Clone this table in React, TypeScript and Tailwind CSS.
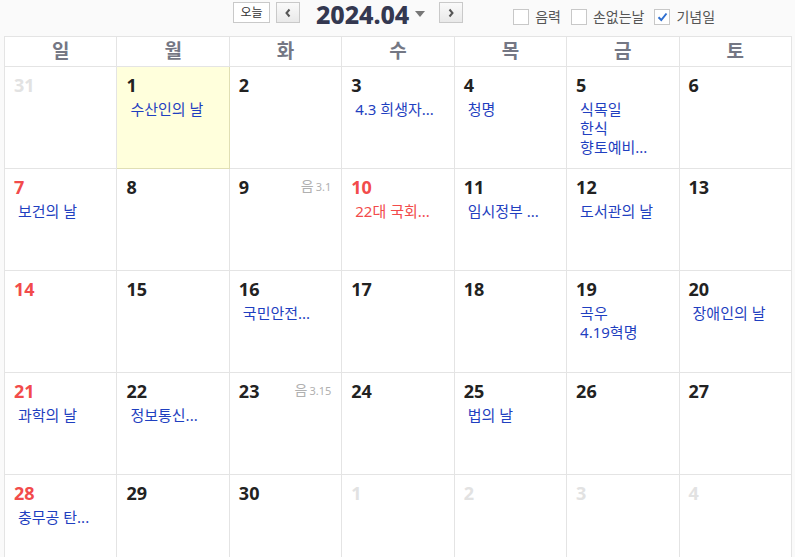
import React from "react";

type Ev = { t: string; red?: boolean };
type Day = { d: number; muted?: boolean; red?: boolean; today?: boolean; lunar?: string; events?: Ev[] };

const DAYS = ["일", "월", "화", "수", "목", "금", "토"];

const WEEKS: Day[][] = [
  [
    { d: 31, muted: true },
    { d: 1, today: true, events: [{ t: "수산인의 날" }] },
    { d: 2 },
    { d: 3, events: [{ t: "4.3 희생자..." }] },
    { d: 4, events: [{ t: "청명" }] },
    { d: 5, events: [{ t: "식목일" }, { t: "한식" }, { t: "향토예비..." }] },
    { d: 6 },
  ],
  [
    { d: 7, red: true, events: [{ t: "보건의 날" }] },
    { d: 8 },
    { d: 9, lunar: "3.1" },
    { d: 10, red: true, events: [{ t: "22대 국회...", red: true }] },
    { d: 11, events: [{ t: "임시정부 ..." }] },
    { d: 12, events: [{ t: "도서관의 날" }] },
    { d: 13 },
  ],
  [
    { d: 14, red: true },
    { d: 15 },
    { d: 16, events: [{ t: "국민안전..." }] },
    { d: 17 },
    { d: 18 },
    { d: 19, events: [{ t: "곡우" }, { t: "4.19혁명" }] },
    { d: 20, events: [{ t: "장애인의 날" }] },
  ],
  [
    { d: 21, red: true, events: [{ t: "과학의 날" }] },
    { d: 22, events: [{ t: "정보통신..." }] },
    { d: 23, lunar: "3.15" },
    { d: 24 },
    { d: 25, events: [{ t: "법의 날" }] },
    { d: 26 },
    { d: 27 },
  ],
  [
    { d: 28, red: true, events: [{ t: "충무공 탄..." }] },
    { d: 29 },
    { d: 30 },
    { d: 1, muted: true },
    { d: 2, muted: true },
    { d: 3, muted: true },
    { d: 4, muted: true },
  ],
];

const font = { fontFamily: '"Noto Sans", "Noto Sans CJK KR", sans-serif' };

const Check = ({ label, checked }: { label: string; checked?: boolean }) => (
  <label className="flex items-center gap-[6px] mr-[10px]">
    <span className="w-[16px] h-[16px] border border-[#c8c8c8] bg-white flex items-center justify-center">
      {checked && (
        <svg width="11" height="10" viewBox="0 0 11 10">
          <path d="M1.5 5.2 L4.3 8 L9.5 1.5" stroke="#2f6fd0" strokeWidth="2" fill="none" />
        </svg>
      )}
    </span>
    <span className="text-[14px] text-[#555]">{label}</span>
  </label>
);

const NavBtn = ({ dir }: { dir: "l" | "r" }) => (
  <button className="w-[24px] h-[21px] border border-[#c9c9c9] bg-gradient-to-b from-[#fafafa] to-[#e9e9e9] flex items-center justify-center">
    <svg width="8" height="10" viewBox="0 0 8 10">
      <path d={dir === "l" ? "M5.5 1.5 L2.5 5 L5.5 8.5" : "M2.5 1.5 L5.5 5 L2.5 8.5"} stroke="#555" strokeWidth="2" fill="none" />
    </svg>
  </button>
);

export default function App() {
  return (
    <div className="w-[795px] h-[557px] overflow-hidden bg-[#fafafa]" style={font}>
      <div className="h-[36px] flex items-start pl-[233px] pt-[2px]">
        <button className="h-[21px] w-[37px] border border-[#c9c9c9] bg-white text-[12px] text-[#333] leading-none">
          오늘
        </button>
        <div className="ml-[6px]">
          <NavBtn dir="l" />
        </div>
        <div className="ml-[16px] -mt-[2px] text-[25px] font-extrabold text-[#343850] leading-[28px] tracking-[-0.1px]">
          2024.04
        </div>
        <svg className="ml-[6px] mt-[9px]" width="10" height="6" viewBox="0 0 10 6">
          <path d="M0 0 L10 0 L5 6 Z" fill="#777" />
        </svg>
        <div className="ml-[14px]">
          <NavBtn dir="r" />
        </div>
        <div className="ml-[50px] mt-[4px] flex items-center">
          <Check label="음력" />
          <Check label="손없는날" />
          <Check label="기념일" checked />
        </div>
      </div>
      <table className="ml-[4px] w-[788px] table-fixed border-collapse bg-white">
        <thead>
          <tr className="h-[30px]">
            {DAYS.map((d) => (
              <th key={d} className="border border-[#e4e4e4] text-[19px] font-bold text-[#747784] leading-none">
                {d}
              </th>
            ))}
          </tr>
        </thead>
        <tbody>
          {WEEKS.map((w, i) => (
            <tr key={i} className="h-[102px]">
              {w.map((c, j) => (
                <td
                  key={j}
                  className={
                    "border align-top pl-[9px] pr-[10px] pt-[5px] " +
                    (c.today ? "bg-[#ffffdc] border-[#e0dfb4]" : "border-[#e4e4e4]")
                  }
                >
                  <div className="flex items-start justify-between">
                    <span
                      className={
                        "text-[18px] font-bold leading-[26px] " +
                        (c.muted ? "text-[#e2e2e2]" : c.red ? "text-[#f24b4b]" : "text-[#222]")
                      }
                    >
                      {c.d}
                    </span>
                    {c.lunar && (
                      <span className="text-[#b0b0b0] mt-[3px] leading-none">
                        <span className="text-[14px]">음</span>
                        <span className="text-[11px] ml-[2px]">{c.lunar}</span>
                      </span>
                    )}
                  </div>
                  <div className="pl-[4px] mt-[2px]">
                    {c.events?.map((e, k) => (
                      <div
                        key={k}
                        className={"text-[15px] leading-[19px] whitespace-nowrap " + (e.red ? "text-[#f24b4b]" : "text-[#1f3fc0]")}
                      >
                        {e.t}
                      </div>
                    ))}
                  </div>
                </td>
              ))}
            </tr>
          ))}
        </tbody>
      </table>
    </div>
  );
}
